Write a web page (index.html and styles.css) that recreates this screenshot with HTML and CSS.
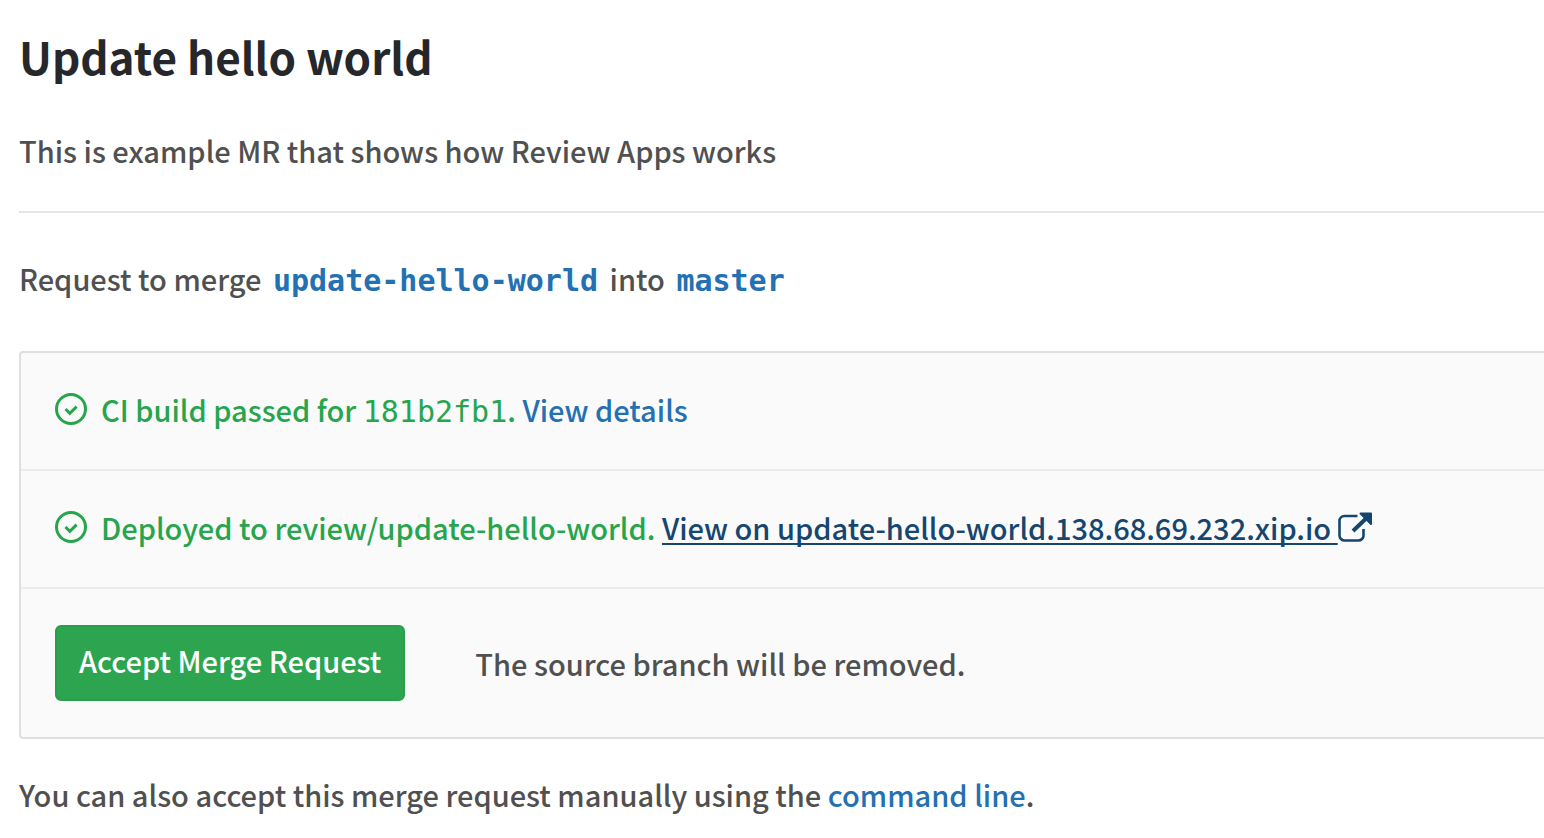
FILE: index.html
```html
<!DOCTYPE html>
<html lang="en">
<head>
<meta charset="utf-8">
<title>Update hello world</title>
<link rel="stylesheet" href="styles.css">
</head>
<body>
<main class="page">
  <h1 class="title">Update hello world</h1>
  <p class="description">This is example MR that shows how Review Apps works</p>
  <hr class="divider">
  <p class="branches">Request to merge <a class="branch" href="#source">update-hello-world</a> into <a class="branch" href="#target">master</a></p>
  <section class="widget">
    <div class="row status">
      <svg class="check" viewBox="0 0 32 32" aria-hidden="true"><circle cx="16" cy="16" r="14.5"/><path d="M10.5 16l4.3 4.3 6.8-6.6"/></svg>
      <span>CI build passed for <code class="sha">181b2fb1</code>. <a class="link" href="#details">View details</a></span>
    </div>
    <div class="row status">
      <svg class="check" viewBox="0 0 32 32" aria-hidden="true"><circle cx="16" cy="16" r="14.5"/><path d="M10.5 16l4.3 4.3 6.8-6.6"/></svg>
      <span>Deployed to review/update-hello-world. <a class="link external" href="#app">View on update-hello-world.138.68.69.232.xip.io <svg class="open" viewBox="0 0 34 30" aria-hidden="true"><path stroke-width="2.6" d="M19.5 4H6.5A5 5 0 0 0 1.5 9v14.500a5 5 0 0 0 5 5h14a5 5 0 0 0 5-5V17"/><path stroke-width="4" d="M15 19L28 6.500"/><path class="head" stroke-width="2" d="M22.500 1.500h10.500v10.500z"/></svg></a></span>
    </div>
    <div class="row actions">
      <button class="accept" type="button">Accept Merge Request</button>
      <span>The source branch will be removed.</span>
    </div>
  </section>
  <p class="hint">You can also accept this merge request manually using the <a class="link" href="#cli">command line</a>.</p>
</main>
</body>
</html>
```

FILE: styles.css
```css
* { box-sizing: border-box; }
body { margin: 0; background: #fff; color: #505050; font: 500 29px/44px "Noto Sans CJK SC", "Open Sans", sans-serif; overflow-x: hidden; }
.page { padding: 26px 0 0 19px; }
.title { margin: 0; color: #26272b; font-size: 44px; line-height: 60px; font-weight: 700; }
.description { margin: 42px 0 39px; }
.divider { margin: 0; border: 0; border-top: 2px solid #e5e5e5; }
.branches { margin: 43px 0 50px; }
.branch { margin: 0 5px; color: #2370b3; font: bold 30px/40px "DejaVu Sans Mono", monospace; text-decoration: none; }
.widget { margin-right: -4px; border: 2px solid #dfdfdf; border-radius: 4px; background: #fafafa; }
.row { display: flex; align-items: center; padding: 36px 34px; white-space: nowrap; }
.row + .row { border-top: 2px solid #ebebee; }
.row.status { gap: 14px; padding: 34px 34px 38px; color: #27a54c; }
.check { width: 32px; height: 32px; fill: none; stroke: #27a54c; stroke-width: 3; flex: none; }
.sha { font: 30px/36px "DejaVu Sans Mono", monospace; }
.link { color: #2370b3; text-decoration: none; }
.external { color: #16466f; text-decoration: underline 2px; text-underline-offset: 3px; text-decoration-skip-ink: none; }
.open { width: 34px; height: 30px; vertical-align: -2px; fill: none; stroke: #16466f; }
.open .head { fill: #16466f; stroke-linejoin: round; }
.actions { gap: 70px; }
.accept { height: 76px; padding: 0 22px 6px; border: 2px solid #2a9f4b; border-radius: 6px; background: #2da44f; color: #fff; font: inherit; }
.hint { margin: 33px 0 20px; }
```
